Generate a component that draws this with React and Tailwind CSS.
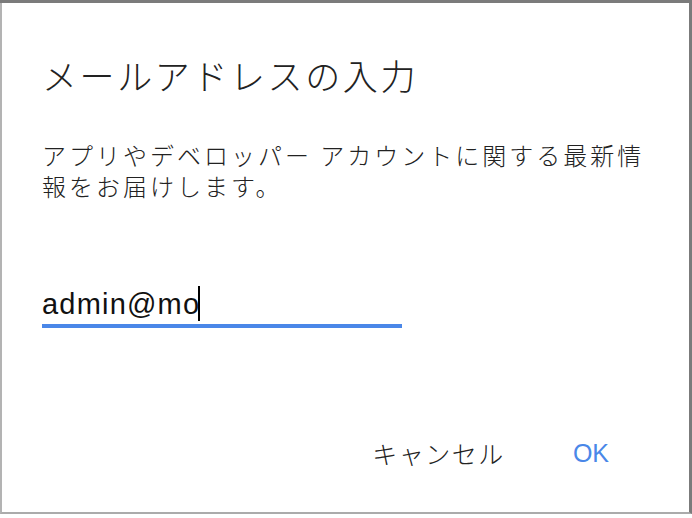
import React from 'react';

export default function App() {
  return (
    <div className="w-[692px] h-[518px] bg-white flex flex-col overflow-hidden" style={{ fontFamily: '"Liberation Sans", "Noto Sans CJK JP", sans-serif' }}>
      <div className="h-[3px] bg-[#7b7b7b] shrink-0" />
      <div className="h-[511px] shrink-0 border-l-2 border-r-[3px] border-b-2 border-l-[#b3b3b3] border-r-[#7b7b7b] border-b-[#ababab] flex flex-col">
        <h2 className="mt-[52px] ml-[40px] text-[35px] leading-[40px] text-[#222] tracking-[2.6px]" style={{ fontFamily: '"Noto Sans CJK JP", sans-serif', fontWeight: 300 }}>
          メールアドレスの入力
        </h2>
        <p className="mt-[44px] ml-[40px] mr-[40px] text-[24px] leading-[31px] text-[#222] tracking-[3px]" style={{ fontFamily: '"Noto Sans CJK JP", sans-serif', fontWeight: 300 }}>
          アプリやデベロッパー アカウントに関する最新情報をお届けします。
        </p>
        <div className="ml-[40px] mt-[82px] w-[360px] border-b-4 border-[#4a87e8] flex items-center h-[45px]">
          <span className="text-[29px] leading-[34px] text-[#111] tracking-[1.2px]">admin@mo</span>
          <span className="-ml-[2px] w-[2px] h-[35px] bg-black" />
        </div>
        <div className="mt-auto mb-[40px] flex justify-end items-center gap-[68px] pr-[80px]">
          <span className="text-[25px] text-[#222] tracking-[1.5px]" style={{ fontFamily: '"Noto Sans CJK JP", sans-serif', fontWeight: 300 }}>キャンセル</span>
          <span className="text-[25px] text-[#4a87e8]">OK</span>
        </div>
      </div>
    </div>
  );
}
